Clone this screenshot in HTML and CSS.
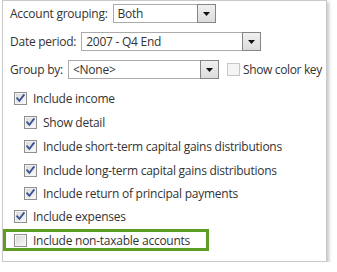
FILE: index.html
```html
<!DOCTYPE html>
<html>
<head>
<meta charset="utf-8">
<link rel="stylesheet" href="styles.css">
</head>
<body>
<div class="panel">
  <div class="field">
    <span class="label">Account grouping:</span>
    <div class="select w1"><span class="value">Both</span><span class="btn"><svg width="7" height="4" viewBox="0 0 7 4"><path d="M0 0H7L3.5 4Z" fill="#111"/></svg></span></div>
  </div>
  <div class="field">
    <span class="label">Date period:</span>
    <div class="select w2"><span class="value">2007 - Q4 End</span><span class="btn"><svg width="7" height="4" viewBox="0 0 7 4"><path d="M0 0H7L3.5 4Z" fill="#111"/></svg></span></div>
  </div>
  <div class="field">
    <span class="label">Group by:</span>
    <div class="select w3"><span class="value">&lt;None&gt;</span><span class="btn"><svg width="7" height="4" viewBox="0 0 7 4"><path d="M0 0H7L3.5 4Z" fill="#111"/></svg></span></div>
    <span class="cb disabled"></span><span class="cbtext key">Show color key</span>
  </div>

  <div class="checks">
    <div class="row"><span class="cb checked"><svg width="13" height="13" viewBox="0 0 13 13"><path d="M3.2 6.4L5.4 8.8L9.8 3.2" fill="none" stroke="#3b5595" stroke-width="1.9" stroke-linecap="square"/></svg></span><span class="cbtext">Include income</span></div>
    <div class="row sub"><span class="cb checked"><svg width="13" height="13" viewBox="0 0 13 13"><path d="M3.2 6.4L5.4 8.8L9.8 3.2" fill="none" stroke="#3b5595" stroke-width="1.9" stroke-linecap="square"/></svg></span><span class="cbtext">Show detail</span></div>
    <div class="row sub"><span class="cb checked"><svg width="13" height="13" viewBox="0 0 13 13"><path d="M3.2 6.4L5.4 8.8L9.8 3.2" fill="none" stroke="#3b5595" stroke-width="1.9" stroke-linecap="square"/></svg></span><span class="cbtext">Include short-term capital gains distributions</span></div>
    <div class="row sub"><span class="cb checked"><svg width="13" height="13" viewBox="0 0 13 13"><path d="M3.2 6.4L5.4 8.8L9.8 3.2" fill="none" stroke="#3b5595" stroke-width="1.9" stroke-linecap="square"/></svg></span><span class="cbtext">Include long-term capital gains distributions</span></div>
    <div class="row sub short"><span class="cb checked"><svg width="13" height="13" viewBox="0 0 13 13"><path d="M3.2 6.4L5.4 8.8L9.8 3.2" fill="none" stroke="#3b5595" stroke-width="1.9" stroke-linecap="square"/></svg></span><span class="cbtext">Include return of principal payments</span></div>
    <div class="row short"><span class="cb checked"><svg width="13" height="13" viewBox="0 0 13 13"><path d="M3.2 6.4L5.4 8.8L9.8 3.2" fill="none" stroke="#3b5595" stroke-width="1.9" stroke-linecap="square"/></svg></span><span class="cbtext">Include expenses</span></div>
    <div class="row highlight"><span class="cb"></span><span class="cbtext">Include non-taxable accounts</span></div>
  </div>
</div>
</body>
</html>
```
FILE: styles.css
```css
html, body {
  margin: 0;
  padding: 0;
  background: #fff;
}
body {
  font-family: "Open Sans", "Noto Sans", sans-serif;
  font-size: 12px;
  letter-spacing: -0.25px;
  color: #333;
}
.panel {
  margin-left: 2px;
  width: 323px;
  border: 1px solid #c9c9c9;
  background: #fff;
  box-shadow: 2px 2px 3px rgba(0, 0, 0, 0.22);
  padding: 2px 0 10px 0;
}
.field {
  display: flex;
  align-items: center;
  height: 20px;
  padding-left: 7px;
  white-space: nowrap;
}
.field + .field {
  margin-top: 8px;
}
.label {
  margin-right: 5px;
  flex: none;
}
.select {
  display: flex;
  height: 19px;
  box-sizing: border-box;
  flex: none;
}
.w1 { width: 103px; }
.w2 { width: 180px; }
.w3 { width: 151px; }
.value {
  flex: 1;
  border: 1px solid #ababab;
  border-right: none;
  padding-left: 4px;
  line-height: 17px;
  white-space: nowrap;
}
.btn {
  width: 19px;
  box-sizing: border-box;
  border: 1px solid #858585;
  background: linear-gradient(#f0f0f0, #dcdcdc);
  display: flex;
  align-items: center;
  justify-content: center;
}
.btn svg { display: block; margin-top: 1px; }
.cb {
  width: 13px;
  height: 13px;
  box-sizing: border-box;
  border: 1px solid #8f8f8f;
  background: linear-gradient(135deg, #d6d6d6, #fbfbfb);
  box-shadow: inset 0 0 0 1px #f4f4f4;
  flex: none;
  position: relative;
}
.cb svg {
  position: absolute;
  left: -1px;
  top: -1px;
}
.cb.disabled {
  border-color: #c6c6c6;
  background: #f4f4f4;
  box-shadow: none;
  margin-left: 8px;
}
.cbtext {
  margin-left: 6px;
  white-space: nowrap;
}
.cbtext.key {
  margin-left: 3px;
  letter-spacing: -0.35px;
}
.checks {
  padding-top: 7px;
}
.row {
  display: flex;
  align-items: center;
  height: 24px;
  padding-left: 11px;
}
.row.sub { padding-left: 21px; }
.row.short { height: 23px; }
.row.highlight {
  margin-top: 1px;
  width: 206px;
  height: 22px;
  box-sizing: border-box;
  border: 3px solid #5c9e24;
  padding-left: 8px;
}
```
